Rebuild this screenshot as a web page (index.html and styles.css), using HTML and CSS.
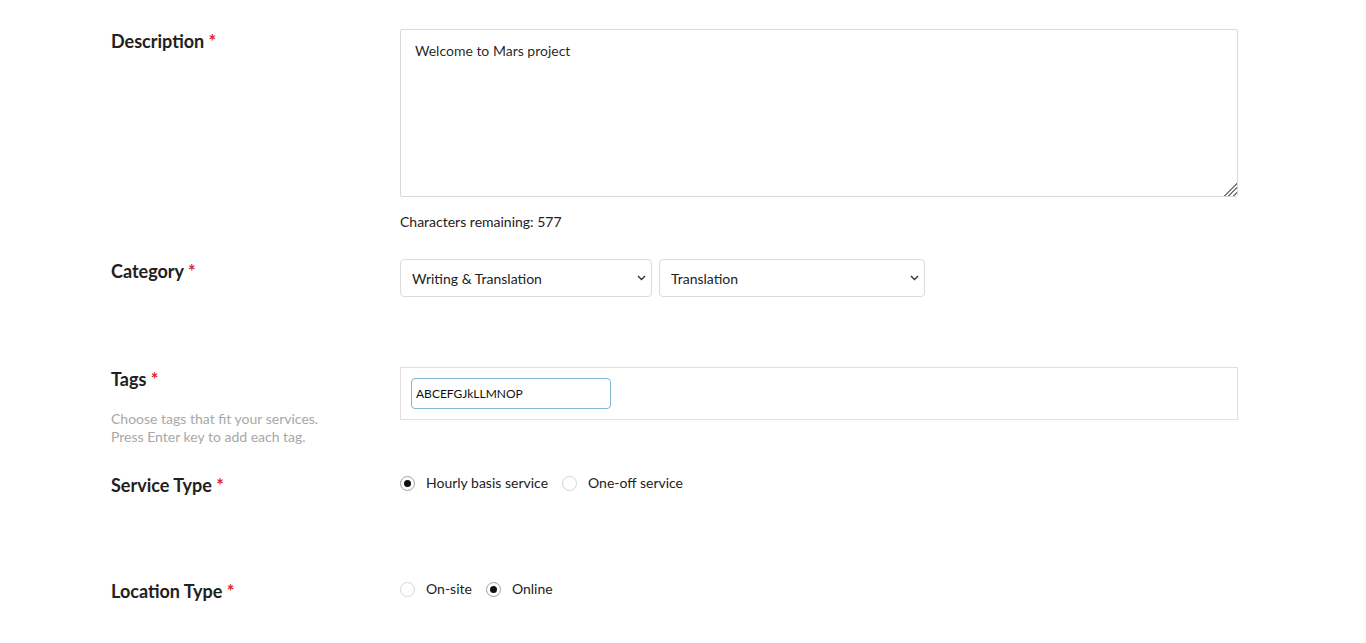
FILE: index.html
```html
<!DOCTYPE html>
<html lang="en">
<head>
<meta charset="utf-8">
<title>Service Listing</title>
<link rel="stylesheet" href="styles.css">
</head>
<body>
<form class="form">
  <div class="row row-desc">
    <div class="label-col"><span class="label">Description <span class="req">*</span></span></div>
    <div class="field-col">
      <textarea class="textarea">Welcome to Mars project</textarea>
      <div class="remaining">Characters remaining: 577</div>
    </div>
  </div>

  <div class="row row-cat">
    <div class="label-col"><span class="label">Category <span class="req">*</span></span></div>
    <div class="field-col selects">
      <span class="select-wrap select-main">
        <select class="select"><option>Writing &amp; Translation</option></select>
        <svg class="chevron" width="9" height="6" viewBox="0 0 9 6"><path d="M1 1 L4.5 4.5 L8 1" fill="none" stroke="#333" stroke-width="1.4"/></svg>
      </span>
      <span class="select-wrap select-sub">
        <select class="select"><option>Translation</option></select>
        <svg class="chevron" width="9" height="6" viewBox="0 0 9 6"><path d="M1 1 L4.5 4.5 L8 1" fill="none" stroke="#333" stroke-width="1.4"/></svg>
      </span>
    </div>
  </div>

  <div class="row row-tags">
    <div class="label-col">
      <span class="label">Tags <span class="req">*</span></span>
      <p class="help">Choose tags that fit your services.<br>Press Enter key to add each tag.</p>
    </div>
    <div class="field-col">
      <div class="tags-box"><input class="tag-input" type="text" value="ABCEFGJkLLMNOP"></div>
    </div>
  </div>

  <div class="row row-service">
    <div class="label-col"><span class="label">Service Type <span class="req">*</span></span></div>
    <div class="field-col radios">
      <label class="radio"><input type="radio" name="svc" checked><span>Hourly basis service</span></label>
      <label class="radio"><input type="radio" name="svc"><span>One-off service</span></label>
    </div>
  </div>

  <div class="row row-loc">
    <div class="label-col"><span class="label">Location Type <span class="req">*</span></span></div>
    <div class="field-col radios">
      <label class="radio"><input type="radio" name="loc"><span>On-site</span></label>
      <label class="radio"><input type="radio" name="loc" checked><span>Online</span></label>
    </div>
  </div>
</form>
</body>
</html>
```
FILE: styles.css
```css
* { box-sizing: border-box; }
html, body { margin: 0; padding: 0; background: #fff; }
body {
  font-family: Lato, "Open Sans", "Liberation Sans", sans-serif;
  color: rgba(0,0,0,.87);
  font-size: 14px;
}
.form {
  padding: 29px 128px 0 111px;
  display: flex;
  flex-direction: column;
}
.row { display: flex; align-items: flex-start; }
.label-col { width: 289px; flex: none; }
.field-col { flex: 1; min-width: 0; }
.label {
  display: block;
  font-size: 18px;
  font-weight: 700;
  line-height: 24px;
  color: #212121;
}
.req { color: #db2828; font-weight: 700; }

.row-desc { margin-bottom: 27px; }
.textarea {
  display: block;
  width: 100%;
  height: 168px;
  border: 1px solid #d9d9d9;
  border-radius: 2px;
  padding: 11px 14px;
  font-family: inherit;
  font-size: 14px;
  line-height: 20px;
  color: rgba(0,0,0,.87);
  resize: vertical;
  outline: none;
}
.textarea::-webkit-resizer {
  background:
    linear-gradient(135deg, #fff 0 50%, transparent 50%),
    repeating-linear-gradient(135deg, transparent 0 2px, #777 2px 3.2px);
}
.remaining { margin-top: 15px; font-size: 14px; line-height: 20px; color: #222; }

.row-cat { margin-bottom: 70px; }
.selects { display: flex; gap: 7px; }
.select-wrap { position: relative; display: block; height: 38px; }
.select {
  -webkit-appearance: none;
  appearance: none;
  width: 100%;
  height: 38px;
  border: 1px solid #dcdcdc;
  border-radius: 4px;
  background: #fff;
  font-family: inherit;
  font-size: 14px;
  color: #222;
  padding: 0 24px 0 11px;
  outline: none;
}
.chevron { position: absolute; right: 6px; top: 16px; pointer-events: none; }
.select-main { width: 252px; }
.select-sub { width: 266px; }

.row-tags { margin-bottom: 27px; }
.help {
  margin: 19px 0 0;
  font-size: 14px;
  line-height: 18px;
  color: #a8a8a8;
}
.tags-box {
  border: 1px solid #e0e0e0;
  height: 53px;
  padding: 10px 10px;
}
.tag-input {
  width: 200px;
  height: 31px;
  border: 1px solid #85b7d9;
  border-radius: 4px;
  padding: 0 4px;
  font-family: inherit;
  font-size: 12px;
  color: #111;
  outline: none;
}

.row-service { margin-bottom: 82px; }
.radios { display: flex; gap: 14px; padding-top: 0; }
.radio { display: flex; align-items: center; gap: 11px; font-size: 14px; line-height: 20px; color: #222; }
.radio input {
  appearance: none;
  -webkit-appearance: none;
  margin: 0;
  width: 15px;
  height: 15px;
  border: 1px solid #d4d4d5;
  border-radius: 50%;
  background: #fff;
  display: grid;
  place-items: center;
}
.radio input:checked { border-color: #a0a0a0; }
.radio input:checked::after {
  content: "";
  width: 7px;
  height: 7px;
  border-radius: 50%;
  background: #111;
}
```
